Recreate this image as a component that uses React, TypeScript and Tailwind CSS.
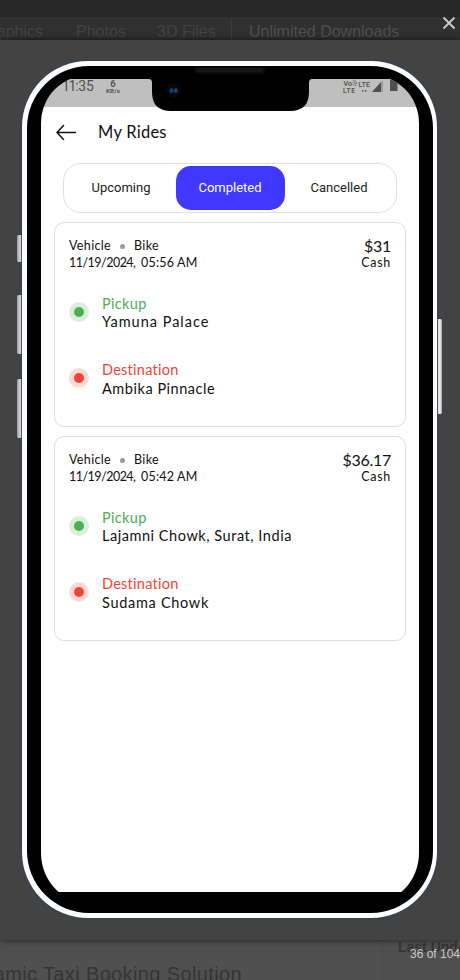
import React from "react";

type Ride = { price: string; time: string; pickup: string; destination: string };

const rides: Ride[] = [
  { price: "$31", time: "05:56 AM", pickup: "Yamuna Palace", destination: "Ambika Pinnacle" },
  { price: "$36.17", time: "05:42 AM", pickup: "Lajamni Chowk, Surat, India", destination: "Sudama Chowk" },
];

const placeTracking: Record<string, string> = {
  "Yamuna Palace": "tracking-[1px]",
  "Sudama Chowk": "tracking-[0.7px]",
};

function Stop({ green, label, place }: { green?: boolean; label: string; place: string }) {
  return (
    <div className="flex h-[37px] items-center">
      <div className={`flex size-5 shrink-0 items-center justify-center rounded-full ${green ? "bg-[#dbeedc]" : "bg-[#fdd9d7]"}`}>
        <div className={`size-[10px] rounded-full ${green ? "bg-[#4caf50]" : "bg-[#f44336]"}`} />
      </div>
      <div className="ml-[13px] whitespace-nowrap pt-[3px] text-[14.5px] leading-[18.5px]">
        <div className={green ? "tracking-[0.35px] text-[#4caf50]" : "tracking-[0.25px] text-[#f44336]"}>{label}</div>
        <div className={`text-[#111] ${placeTracking[place] ?? "tracking-[0.54px]"}`}>{place}</div>
      </div>
    </div>
  );
}

function RideCard({ ride }: { ride: Ride }) {
  return (
    <article className="h-[205px] rounded-[10px] border border-[#dedede] px-[14px] pt-[15px]">
      <div className="flex justify-between text-[12.5px] leading-[16.5px] text-[#111]">
        <div>
          <div className="flex items-center tracking-[0.35px]">
            <span className="w-[42px]">Vehicle</span>
            <span className="ml-[9px] mr-[9px] size-[5px] rounded-full bg-[#999]" />
            <span>Bike</span>
          </div>
          <div className="flex tracking-[-0.52px]">
            <span className="w-[72px]">11/19/2024,</span>
            <span className="tracking-[0.2px]">{ride.time}</span>
          </div>
        </div>
        <div className="-mt-px text-right">
          <div className="text-[16px] leading-[17.5px] tracking-[-0.3px]">{ride.price}</div>
          <div className="tracking-[0.7px]">Cash</div>
        </div>
      </div>
      <div className="mt-[22px] flex flex-col gap-[29.5px]">
        <Stop green label="Pickup" place={ride.pickup} />
        <Stop label="Destination" place={ride.destination} />
      </div>
    </article>
  );
}

function StatusBar() {
  return (
    <div className="flex h-7 shrink-0 bg-[#bfbfbf] text-[#4f4f4f]">
      <span className="ml-[21px] mt-[-1px] w-[30px] font-['Roboto',sans-serif] text-[14px] leading-4 tracking-[-1.3px]">11<span className="tracking-[-0.2px]">:35</span></span>
      <svg className="ml-[11px] h-[18px] w-[20px]" viewBox="0 0 20 18" fill="currentColor" fontFamily="Roboto, sans-serif" fontWeight="600" textAnchor="middle">
        <text x="10" y="8" fontSize="9.500">6</text>
        <text x="10" y="14" fontSize="6" textLength="14" lengthAdjust="spacingAndGlyphs">KB/s</text>
      </svg>
      <svg className="ml-auto mr-[20px] h-[16px] w-[58px]" viewBox="0 0 58 16" fill="currentColor" fontFamily="Roboto, sans-serif" fontWeight="600">
        <text x="2.500" y="7" fontSize="7" textLength="8.500">Vo</text>
        <text x="2" y="14" fontSize="6.500" textLength="12">LTE</text>
        <path d="M11.500 3q3.500 0 3.500 4M11.500 5q1.500 0 1.500 2M12 1q4 1 4 4" fill="none" stroke="currentColor" strokeWidth=".6" />
        <text x="17.500" y="8" fontSize="8" fontWeight="500" textLength="11.500" lengthAdjust="spacingAndGlyphs">LTE</text>
        <path d="M21 11h1.500v1.500H21zM24 11h1.500v1.500H24z" />
        <path d="M42 1v12H31z" opacity=".3" />
        <path d="M40 3v10h-9z" />
        <path d="M49 1h7.500v11H49z" />
      </svg>
    </div>
  );
}

const tab = "flex h-[44px] w-[109px] items-center justify-center rounded-[15px] text-[13px]";
const sideKey = "absolute left-[17px] w-[5px] rounded-l-[2px] border-y border-[#34404d] bg-[linear-gradient(90deg,#999,#fff)]";

export default function App() {
  return (
    <div className="relative flex h-[980px] w-[460px] flex-col overflow-hidden bg-[#505050] font-['Liberation_Sans',sans-serif]">
      <div className="h-[17px] shrink-0 bg-[#262626]" />
      <nav className="flex h-[23px] shrink-0 whitespace-nowrap bg-[#303030] pt-[5px] text-[16px] leading-[20px] text-[#434343]">
        <span className="-ml-[21px] w-[97px]">Graphics</span>
        <span className="w-[81px]">Photos</span>
        <span className="w-[74px]">3D Files</span>
        <span className="-mt-1 h-6 w-[18px] border-l border-[#3c3c3c]" />
        <span className="text-[#505050]">Unlimited Downloads</span>
      </nav>

      <main className="relative h-[900px] shrink-0 bg-[#434343] pl-[22px] pt-[21px] shadow-[0_0_7px_rgba(0,0,0,0.65)]">
        <div className={`${sideKey} top-[194px] h-[29px]`} />
        <div className={`${sideKey} top-[254px] h-[61px]`} />
        <div className={`${sideKey} top-[338px] h-[61px]`} />
        <div className="absolute left-[437px] top-[278px] h-[97px] w-[5px] rounded-r-[2px] border-y border-[#34404d] bg-[linear-gradient(90deg,#eee,#eee_60%,#a8a0a0)]" />

        <div className="relative h-[857px] w-[415px] rounded-[66px] bg-white p-[5px] pr-[4px] shadow-[0_0_1px_1px_#33465c]">
          <div className="h-[847px] rounded-[62px] bg-black pl-[14px] pt-[9px]">
            <div className="flex h-[830px] w-[378px] flex-col overflow-hidden rounded-t-[48px] rounded-b-[52px] bg-black py-1 font-['Lato',sans-serif]">
              <StatusBar />
              <div className="h-[785px] shrink-0 bg-white">
                <header className="flex h-[50px] items-center pl-[14px]">
                  <svg className="h-[16px] w-[22px]" viewBox="0 0 22 16" fill="none" stroke="#111" strokeWidth="1.5" strokeLinecap="round" strokeLinejoin="round">
                    <path d="M20.500 8.500H2M8.500 1.500L2 8.500l6.500 7" />
                  </svg>
                  <h1 className="ml-[21px] text-[16.5px] leading-5 tracking-[0.25px] text-[#111]">My Rides</h1>
                </header>
                <div className="ml-[22px] mt-[6px] flex h-[50px] w-[334px] justify-center rounded-[18px] border border-[#dedede] pt-[2px] font-['Roboto',sans-serif] text-[#222]">
                  <div className={tab}>Upcoming</div>
                  <div className={`${tab} bg-[#4038ff] text-white`}>Completed</div>
                  <div className={tab}>Cancelled</div>
                </div>
                <div className="mx-[13px] mt-[9px] flex flex-col gap-[9px]">
                  {rides.map((ride) => <RideCard key={ride.time} ride={ride} />)}
                </div>
              </div>
            </div>
          </div>
          <svg className="absolute left-[125px] top-[3px] h-[50px] w-[168px]" viewBox="0 0 168 50">
            <path d="M2 10H165V15Q162 15 162 19V28Q162 47 143 47H24Q5 47 5 28V19Q5 15 2 15Z" fill="#000" />
            <path d="M47 2.500H119V6Q119 10 115 10H51Q47 10 47 6Z" fill="#0a0a0a" />
            <rect x="49.500" y="4.500" width="66" height="3" rx="1.500" fill="#151515" stroke="#222" strokeWidth=".5" />
            <circle cx="26.500" cy="26.500" r="7.500" fill="#080808" />
            <ellipse cx="24.500" cy="26.500" rx="2" ry="2.500" fill="#154258" />
            <ellipse cx="28.800" cy="26.500" rx="2" ry="2.500" fill="#174080" />
          </svg>
        </div>
      </main>

      <footer className="flex h-10 shrink-0 text-[#353535]">
        <div className="w-[382px] shrink-0 whitespace-nowrap pt-[21px] text-[20px] leading-[26px]">
          <span className="-ml-[43px] tracking-[0.37px]">Dynamic Taxi Booking Solution</span>
        </div>
        <div className="whitespace-nowrap border-l border-[#4a4a4a] pl-[15px] text-[14px] font-bold leading-[14px]">Last Update</div>
      </footer>

      <svg className="absolute left-[442px] top-[16px] size-[14px]" viewBox="0 0 14 14" stroke="#ccc" strokeWidth="1.800">
        <path d="M1.500 1.500l11 11M12.500 1.500l-11 11" />
      </svg>
      <span className="absolute left-[410px] top-[946px] whitespace-nowrap text-[12px] leading-4 text-[#ccc]">36 of 104</span>
    </div>
  );
}
